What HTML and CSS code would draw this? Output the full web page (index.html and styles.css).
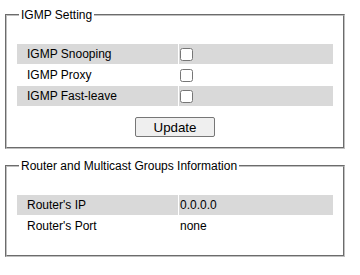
FILE: index.html
```html
<!DOCTYPE html>
<html lang="en">
<head>
  <meta charset="UTF-8">
  <meta name="viewport" content="width=device-width, initial-scale=1.0">
  <title>IGMP Setting</title>
  <link rel="stylesheet" href="styles.css">
</head>
<body>
  <fieldset class="box">
    <legend>IGMP Setting</legend>
    <table class="info">
      <tr class="shade">
        <td class="label">IGMP Snooping</td>
        <td><input type="checkbox" id="snooping"></td>
      </tr>
      <tr>
        <td class="label">IGMP Proxy</td>
        <td><input type="checkbox" id="proxy"></td>
      </tr>
      <tr class="shade">
        <td class="label">IGMP Fast-leave</td>
        <td><input type="checkbox" id="fastleave"></td>
      </tr>
    </table>
    <div class="actions">
      <button type="button" class="update">Update</button>
    </div>
  </fieldset>

  <fieldset class="box router-box">
    <legend>Router and Multicast Groups Information</legend>
    <table class="info">
      <tr class="shade">
        <td class="label">Router's IP</td>
        <td>0.0.0.0</td>
      </tr>
      <tr>
        <td class="label">Router's Port</td>
        <td>none</td>
      </tr>
    </table>
  </fieldset>
</body>
</html>
```

FILE: styles.css
```css
body {
  font-family: "Liberation Sans", Arial, sans-serif;
  font-size: 12px;
  color: #000;
  background: #fff;
  margin: 8px 0 0 5px;
}
.box {
  width: 340px;
  box-sizing: border-box;
  margin: 0;
  padding: 0 9px 10px;
  border: 2px groove #c0c0c0;
}
.box legend {
  padding: 0 2px;
  margin-left: 3px;
  line-height: 14px;
}
.router-box {
  margin-top: 10px;
  padding-bottom: 18px;
}
.info {
  width: 100%;
  border-spacing: 1px;
  margin-top: 21px;
}
.info td {
  height: 20px;
  padding: 0 0 0 1px;
  vertical-align: middle;
}
.info .label {
  width: 151px;
  padding-left: 10px;
}
.shade td {
  background: #d9d9d9;
}
.info input[type="checkbox"] {
  margin: 0;
  width: 13px;
  height: 13px;
  vertical-align: middle;
}
.actions {
  text-align: center;
  margin-top: 10px;
}
.update {
  font-family: "Liberation Sans", Arial, sans-serif;
  font-size: 13.33px;
  width: 80px;
  height: 20px;
  padding: 0;
  background: #efefef;
  border: 1px solid #767676;
  border-radius: 2px;
  color: #000;
}
```
